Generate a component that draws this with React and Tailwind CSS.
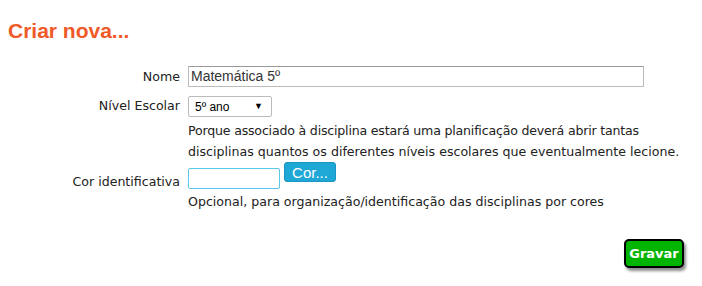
export default function App() {
  const v = { fontFamily: '"DejaVu Sans", Verdana, sans-serif' };
  const a = { fontFamily: '"Liberation Sans", Arial, sans-serif' };
  return (
    <div className="w-[702px] h-[286px] bg-white relative text-[#222]" style={v}>
      <div className="pt-[19px] pl-[8px]">
        <h1 className="text-[21px] font-bold text-[#f05a28] leading-[24px]" style={a}>Criar nova...</h1>
      </div>
      <div className="mt-[23px] grid grid-cols-[180px_1fr] gap-x-[8px] text-[12.6px]">
        <div className="text-right leading-[20px] pt-[1px]">Nome</div>
        <div>
          <input
            className="w-[456px] h-[21px] border border-[#bbb] border-t-[#999] px-[2px] text-[14px] text-[#333] outline-none bg-white"
            style={a}
            defaultValue="Matemática 5º"
          />
        </div>
        <div className="text-right leading-[20px] mt-[9px]">Nível Escolar</div>
        <div className="mt-[9px]">
          <div className="w-[84px] h-[21px] border border-[#bbb] rounded-[2px] flex items-center justify-between pl-[6px] pr-[8px] text-[12px] text-black" style={a}>
            <span>5º ano</span>
            <span className="text-[9px]">▼</span>
          </div>
          <p className="mt-[3px] leading-[21px]">
            <span className="tracking-[-0.2px]">Porque associado à disciplina estará uma planificação deverá abrir tantas</span><br />
            disciplinas quantos os diferentes níveis escolares que eventualmente lecione.
          </p>
        </div>
        <div className="text-right leading-[20px] mt-[9px] pt-[1px]">Cor identificativa</div>
        <div className="mt-[0px]">
          <div className="flex items-start">
            <div className="w-[92px] h-[21px] mt-[6px] border border-[#5bc8ea] rounded-[2px] bg-white" />
            <button className="ml-[4px] w-[52px] h-[20px] bg-[#1fa8d6] rounded-[3px] text-white text-[15px] leading-[20px] border border-[#1a96c2]" style={a}>Cor...</button>
          </div>
          <p className="mt-[3px] leading-[20px]">Opcional, para organização/identificação das disciplinas por cores</p>
        </div>
      </div>
      <div className="absolute left-[624px] top-[239px]">
        <button className="w-[60px] h-[29px] bg-[#00b400] border-2 border-black rounded-[5px] text-white font-bold text-[13px] shadow-[2px_3px_3px_rgba(0,0,0,0.45)]" style={v}>Gravar</button>
      </div>
    </div>
  );
}
